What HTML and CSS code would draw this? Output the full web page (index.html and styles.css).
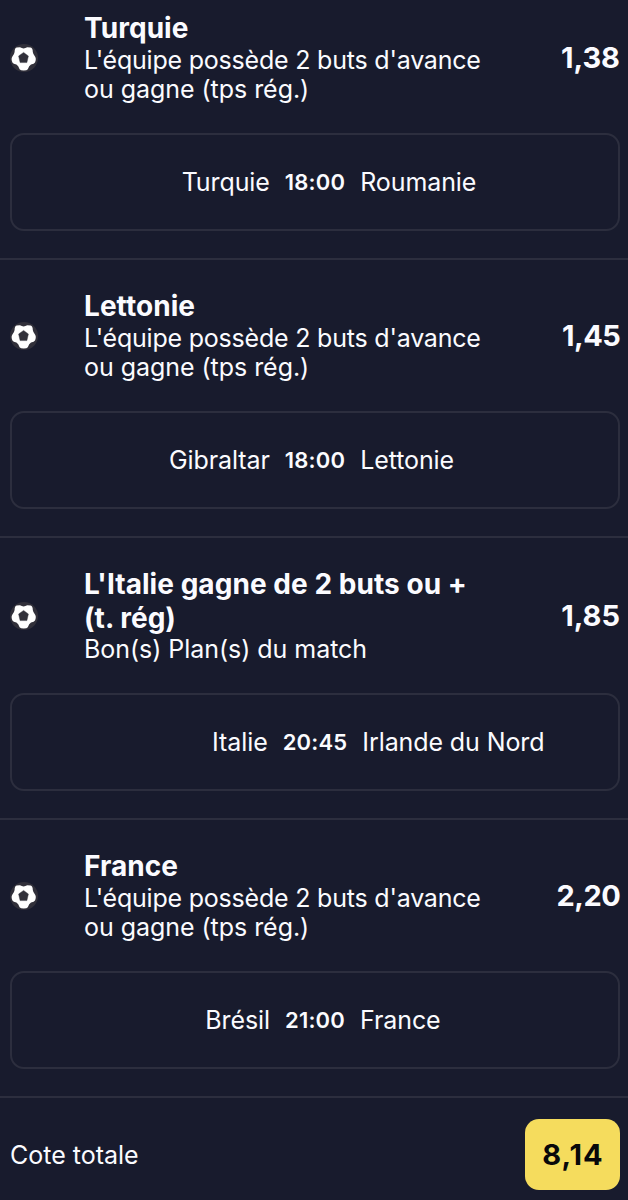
FILE: index.html
```
<!DOCTYPE html>
<html lang="fr">
<head>
<meta charset="utf-8">
<title>Cote totale</title>
<link rel="stylesheet" href="styles.css">
</head>
<body>
<svg class="defs" width="0" height="0" aria-hidden="true">
  <symbol id="ball" viewBox="0 0 28 28">
    <circle cx="14" cy="14" r="14" fill="#31303a"/>
    <path d="M6.6 3.4 10 3.3Q13.6 5.6 17.2 3.3L20.6 3.4Q22.9 4.2 22.8 8Q23 10 25 12.4Q26.6 14.6 25 18.4Q24.2 20 21 20.4Q19 21.4 17.8 25.2Q17 26.4 13.7 26.4Q10.4 26.4 9.6 25.2Q8.4 21.4 6.4 20.4Q3.2 20 2.4 18.4Q.8 14.6 2.4 12.4Q4.4 10 4.6 8Q4.5 4.2 6.6 3.4Z" fill="#fff"/>
    <path d="M13.6 8.4 18.4 12 16.9 18.6H10.1L8.6 12Z" fill="#31303a" stroke="#31303a" stroke-width=".4" stroke-linejoin="round"/>
  </symbol>
</svg>
<main class="slip">
  <section class="bet">
    <div class="pick">
      <svg class="icon"><use href="#ball"/></svg>
      <div class="label"><h2 class="title">Turquie</h2><p class="desc"><span class="tight">L'équipe possède 2 buts d'avance</span><br>ou gagne (tps rég.)</p></div>
      <span class="odds">1,38</span>
    </div>
    <div class="match"><span class="home">Turquie</span><span class="time">18:00</span><span class="away">Roumanie</span></div>
  </section>
  <section class="bet">
    <div class="pick">
      <svg class="icon"><use href="#ball"/></svg>
      <div class="label"><h2 class="title">Lettonie</h2><p class="desc"><span class="tight">L'équipe possède 2 buts d'avance</span><br>ou gagne (tps rég.)</p></div>
      <span class="odds odds-narrow">1,45</span>
    </div>
    <div class="match"><span class="home">Gibraltar</span><span class="time">18:00</span><span class="away">Lettonie</span></div>
  </section>
  <section class="bet">
    <div class="pick">
      <svg class="icon"><use href="#ball"/></svg>
      <div class="label"><h2 class="title">L'Italie gagne de 2 buts ou +<br>(t. rég)</h2><p class="desc desc-single">Bon(s) Plan(s) du match</p></div>
      <span class="odds">1,85</span>
    </div>
    <div class="match"><span class="home">Italie</span><span class="time">20:45</span><span class="away">Irlande du Nord</span></div>
  </section>
  <section class="bet">
    <div class="pick">
      <svg class="icon"><use href="#ball"/></svg>
      <div class="label"><h2 class="title">France</h2><p class="desc"><span class="tight">L'équipe possède 2 buts d'avance</span><br>ou gagne (tps rég.)</p></div>
      <span class="odds odds-narrow">2,20</span>
    </div>
    <div class="match"><span class="home">Brésil</span><span class="time">21:00</span><span class="away">France</span></div>
  </section>
  <footer class="total"><span class="total-label">Cote totale</span><span class="total-odds">8,14</span></footer>
</main>
</body>
</html>
```
FILE: styles.css
```
* { box-sizing: border-box; }
body {
  margin: 0;
  height: 1200px;
  overflow: hidden;
  background: #181b2d;
  color: #fbfbff;
  font-family: Inter, "Liberation Sans", sans-serif;
}
.defs { display: block; }
.slip { margin-top: -18px; }
.bet {
  padding: 29px 8px 27px 10px;
  border-bottom: 2px solid #2c2e3e;
}
.pick { display: flex; align-items: center; }
.icon { width: 28px; height: 28px; flex: none; margin-right: 46px; }
.label { flex: 1; white-space: nowrap; }
.title, .desc { margin: 0; }
.title { font-size: 28px; line-height: 34px; font-weight: 700; letter-spacing: 0.05px; }
.desc { height: 60px; font-size: 25px; line-height: 29.4px; padding-top: 0.6px; letter-spacing: -0.04px; }
.desc-single { height: 30px; padding-top: 0; }
.tight { letter-spacing: -0.21px; }
.odds { font-size: 29px; font-weight: 700; line-height: 34px; }
.odds-narrow { letter-spacing: -0.5px; margin-right: -0.3px; }
.match {
  display: grid;
  grid-template-columns: 1fr auto 1fr;
  align-items: center;
  column-gap: 15px;
  height: 98px;
  margin-top: 28px;
  padding-top: 0.5px;
  border: 2px solid #2c2e3e;
  border-radius: 14px;
  font-size: 25px;
  letter-spacing: -0.1px;
  white-space: nowrap;
}
.home { text-align: right; }
.time { font-size: 22px; font-weight: 600; letter-spacing: 0.2px; }
.total {
  display: flex;
  align-items: center;
  justify-content: space-between;
  padding: 21px 8px 0 10px;
}
.total-label { font-size: 25px; letter-spacing: 0; }
.total-odds {
  width: 95px;
  height: 71px;
  border-radius: 14px;
  background: #f5dc5d;
  color: #08080a;
  font-size: 29px;
  font-weight: 700;
  line-height: 72px;
  letter-spacing: 1px;
  text-indent: 1px;
  text-align: center;
}
```
